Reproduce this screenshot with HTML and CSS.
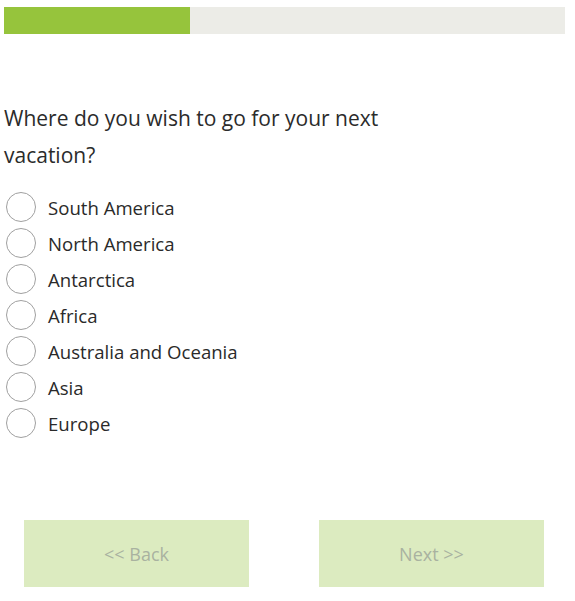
FILE: index.html
```html
<!DOCTYPE html>
<html lang="en">
<head>
<meta charset="utf-8">
<title>Survey</title>
<link rel="stylesheet" href="styles.css">
</head>
<body>
<div class="page">
  <div class="progress"><div class="progress-fill" style="width:33.2%"></div></div>
  <h2 class="question">Where do you wish to go for your next vacation?</h2>
  <ul class="options">
    <li class="option"><span class="radio"></span><span class="label">South America</span></li>
    <li class="option"><span class="radio"></span><span class="label">North America</span></li>
    <li class="option"><span class="radio"></span><span class="label">Antarctica</span></li>
    <li class="option"><span class="radio"></span><span class="label">Africa</span></li>
    <li class="option"><span class="radio"></span><span class="label">Australia and Oceania</span></li>
    <li class="option"><span class="radio"></span><span class="label">Asia</span></li>
    <li class="option"><span class="radio"></span><span class="label">Europe</span></li>
  </ul>
  <div class="nav">
    <button class="btn">&lt;&lt; Back</button>
    <button class="btn">Next &gt;&gt;</button>
  </div>
</div>
</body>
</html>
```
FILE: styles.css
```css
html, body {
  margin: 0;
  padding: 0;
  background: #ffffff;
}
body {
  font-family: "Open Sans", "Noto Sans", sans-serif;
  color: #333333;
}
.page {
  padding: 7px 10px 0 4px;
}
.progress {
  height: 27px;
  background: #ececE7;
}
.progress-fill {
  height: 100%;
  background: #96c43c;
}
.question {
  margin: 66px 0 0 0;
  width: 400px;
  font-size: 21px;
  font-weight: 400;
  line-height: 37px;
  color: #2b2b2b;
}
.options {
  list-style: none;
  margin: 15px 0 0 0;
  padding: 0;
}
.option {
  display: flex;
  align-items: center;
  height: 36px;
  padding-left: 2px;
}
.radio {
  box-sizing: border-box;
  width: 30px;
  height: 30px;
  border: 1.5px solid #a0a0a0;
  border-radius: 50%;
  flex: none;
}
.label {
  margin-left: 12px;
  font-size: 18.6px;
  color: #2a2a2a;
}
.nav {
  display: flex;
  gap: 70px;
  margin: 79px 0 0 20px;
}
.btn {
  width: 225px;
  height: 67px;
  border: none;
  background: #dcebc0;
  color: #a9b2a0;
  font-family: "Open Sans", "Noto Sans", sans-serif;
  font-size: 18px;
  padding: 0;
}
```
